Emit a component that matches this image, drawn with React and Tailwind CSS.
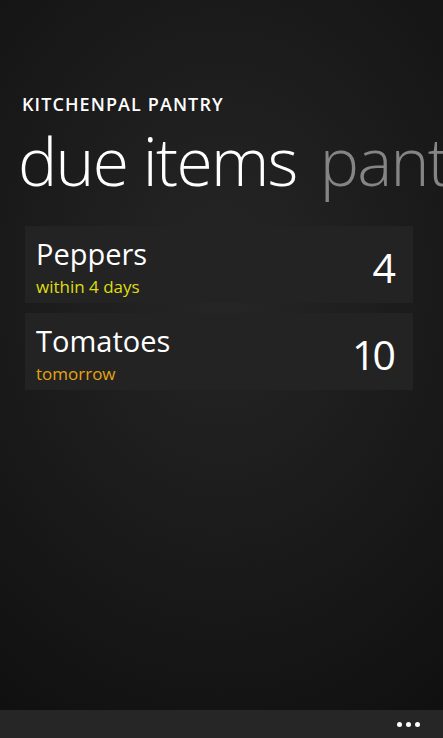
export default function App() {
  const items = [
    { name: "Peppers", due: "within 4 days", color: "text-[#dede10]", count: "4" },
    { name: "Tomatoes", due: "tomorrow", color: "text-[#e6a312]", count: "10" },
  ];
  return (
    <div
      className="flex h-[738px] w-full flex-col overflow-hidden bg-[radial-gradient(ellipse_90%_70%_at_50%_38%,#262626_0%,#1c1c1c_45%,#101010_100%)] text-white"
      style={{ fontFamily: '"Open Sans", "Noto Sans", sans-serif' }}
    >
      <div className="flex-1">
        <div className="pl-[22px] pt-[92px] text-[18px] font-semibold leading-[24px] tracking-[1.1px]">
          KITCHENPAL PANTRY
        </div>
        <div className="mt-[4px] whitespace-nowrap pl-[18px] text-[66px] font-light leading-[80px] tracking-[-1.7px]">
          <span>due items</span>
          <span className="ml-[23px] text-[#858585]">pantry</span>
        </div>
        <div className="mt-[26px] flex w-[388px] flex-col gap-[10px] ml-[25px]">
          {items.map((it) => (
            <div key={it.name} className="flex h-[77px] justify-between bg-[#232323] pl-[11px] pr-[20px]">
              <div className="flex flex-col pt-[10px]">
                <div className="text-[29px] leading-[35px]">{it.name}</div>
                <div className={`mt-[6px] text-[17px] leading-[20px] ${it.color}`}>{it.due}</div>
              </div>
              <div className="pt-[16px] text-[41px] font-normal leading-[50px] tracking-[-3px]">{it.count}</div>
            </div>
          ))}
        </div>
      </div>
      <div className="flex h-[28px] items-center justify-end gap-[4px] bg-[#262626] pr-[23px]">
        <span className="h-[5px] w-[5px] rounded-full bg-white" />
        <span className="h-[5px] w-[5px] rounded-full bg-white" />
        <span className="h-[5px] w-[5px] rounded-full bg-white" />
      </div>
    </div>
  );
}
